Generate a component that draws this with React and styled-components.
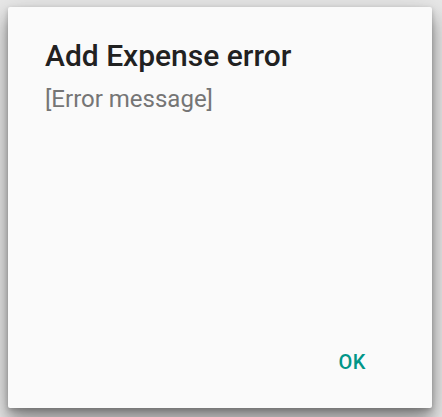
import React from "react";
import styled, { createGlobalStyle } from "styled-components";

const Global = createGlobalStyle`
  html, body {
    margin: 0;
    padding: 0;
    background: #e8e8e8;
  }
  body {
    font-family: Roboto, "Noto Sans", sans-serif;
  }
`;

const Screen = styled.div`
  width: 442px;
  height: 417px;
  box-sizing: border-box;
  padding: 7px 10px 9px 8px;
  display: flex;
  overflow: hidden;
`;

const Dialog = styled.div`
  flex: 1;
  background: #fafafa;
  border-radius: 2px;
  box-shadow: 0 12px 16px rgba(0, 0, 0, 0.3), 0 8px 30px rgba(0, 0, 0, 0.22),
    0 2px 5px rgba(0, 0, 0, 0.2);
  display: flex;
  flex-direction: column;
  padding: 31px 36px 34px 37px;
  box-sizing: border-box;
`;

const Title = styled.h1`
  margin: 0;
  font-size: 30px;
  font-weight: 500;
  color: #212121;
  line-height: 35px;
`;

const Message = styled.p`
  margin: 12px 0 0;
  font-size: 24px;
  font-weight: 400;
  color: #757575;
  line-height: 28px;
`;

const Actions = styled.div`
  margin-top: auto;
  display: flex;
  justify-content: flex-end;
`;

const Button = styled.button`
  border: none;
  background: none;
  padding: 0 30px 0 0;
  font-family: inherit;
  font-size: 20px;
  line-height: 24px;
  font-weight: 500;
  color: #009688;
  letter-spacing: 0.6px;
  cursor: pointer;
`;

export default function App() {
  return (
    <>
      <Global />
      <Screen>
        <Dialog>
          <Title>Add Expense error</Title>
          <Message>[Error message]</Message>
          <Actions>
            <Button>OK</Button>
          </Actions>
        </Dialog>
      </Screen>
    </>
  );
}
